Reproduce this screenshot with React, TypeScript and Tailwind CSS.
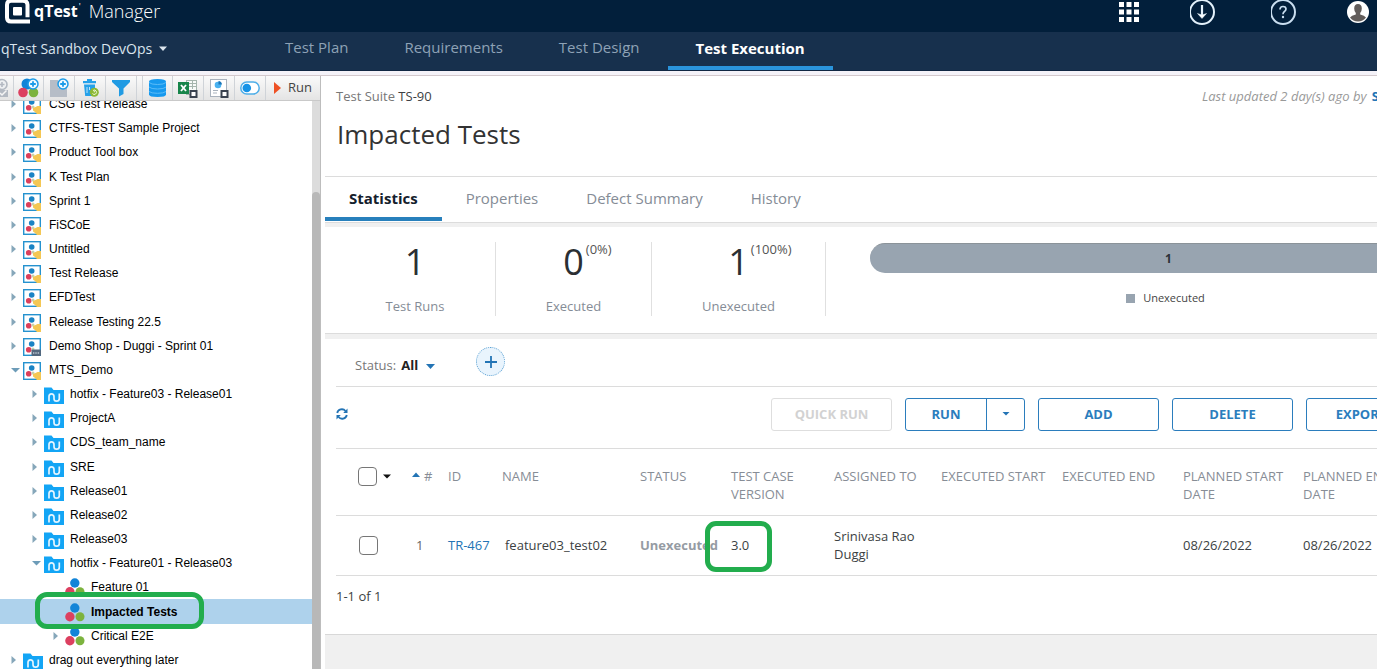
import type { ReactNode } from "react";

type IconKind = "release" | "demo" | "folder" | "suite";
type Arrow = "right" | "down" | "none";

interface TreeItem {
  label: string;
  level: 0 | 1 | 2;
  icon: IconKind;
  arrow: Arrow;
  selected?: boolean;
}

const tree: TreeItem[] = [
  { label: "CSG Test Release", level: 0, icon: "release", arrow: "right" },
  { label: "CTFS-TEST Sample Project", level: 0, icon: "release", arrow: "right" },
  { label: "Product Tool box", level: 0, icon: "release", arrow: "right" },
  { label: "K Test Plan", level: 0, icon: "release", arrow: "right" },
  { label: "Sprint 1", level: 0, icon: "release", arrow: "right" },
  { label: "FiSCoE", level: 0, icon: "release", arrow: "right" },
  { label: "Untitled", level: 0, icon: "release", arrow: "right" },
  { label: "Test Release", level: 0, icon: "release", arrow: "right" },
  { label: "EFDTest", level: 0, icon: "release", arrow: "right" },
  { label: "Release Testing 22.5", level: 0, icon: "release", arrow: "right" },
  { label: "Demo Shop - Duggi - Sprint 01", level: 0, icon: "demo", arrow: "right" },
  { label: "MTS_Demo", level: 0, icon: "release", arrow: "down" },
  { label: "hotfix - Feature03 - Release01", level: 1, icon: "folder", arrow: "right" },
  { label: "ProjectA", level: 1, icon: "folder", arrow: "right" },
  { label: "CDS_team_name", level: 1, icon: "folder", arrow: "right" },
  { label: "SRE", level: 1, icon: "folder", arrow: "right" },
  { label: "Release01", level: 1, icon: "folder", arrow: "right" },
  { label: "Release02", level: 1, icon: "folder", arrow: "right" },
  { label: "Release03", level: 1, icon: "folder", arrow: "right" },
  { label: "hotfix - Feature01 - Release03", level: 1, icon: "folder", arrow: "down" },
  { label: "Feature 01", level: 2, icon: "suite", arrow: "none" },
  { label: "Impacted Tests", level: 2, icon: "suite", arrow: "none", selected: true },
  { label: "Critical E2E", level: 2, icon: "suite", arrow: "right" },
  { label: "drag out everything later", level: 0, icon: "folder", arrow: "right" },
];

const indents = ["pl-[10px]", "pl-[31px]", "pl-[52px]"];

function TreeArrow({ arrow }: { arrow: Arrow }) {
  return (
    <svg width="12" height="10" viewBox="0 0 12 10" className="shrink-0" aria-hidden="true">
      {arrow === "right" && <path d="M1.5 1 L6 5 L1.5 9 Z" fill="#86a7ba" />}
      {arrow === "down" && <path d="M1 3 H10 L5.5 7.5 Z" fill="#6d9cb8" />}
    </svg>
  );
}

function TreeIcon({ kind }: { kind: IconKind }) {
  if (kind === "folder") {
    return (
      <svg width="20" height="17" viewBox="0 0 20 17" aria-hidden="true">
        <path d="M0 0.5 H7.5 L9.5 3 H20 V17 H0 Z" fill="#13a5f5" />
        <path
          d="M5 14.5 V9.5 Q5 6.8 7.5 6.8 Q10 6.8 10 9.5 V11.5 Q10 14.2 12.5 14.2 Q15.3 14.2 15.3 11.5 V6.5"
          fill="none"
          stroke="#e4f5ff"
          strokeWidth="1.7"
        />
      </svg>
    );
  }
  if (kind === "suite") {
    return (
      <svg width="20" height="19" viewBox="0 0 20 19" aria-hidden="true">
        <circle cx="9.8" cy="5" r="4.7" fill="#1184d8" />
        <circle cx="4.9" cy="13.7" r="4.7" fill="#dc4060" />
        <circle cx="15" cy="13.7" r="4.5" fill="#7cb33e" />
      </svg>
    );
  }
  return (
    <svg width="18" height="18" viewBox="0 0 18 18" aria-hidden="true">
      <rect x="0.7" y="0.7" width="16.6" height="16.6" fill="#fff" stroke="#2592cf" strokeWidth="1.4" />
      <circle cx="8.7" cy="6" r="2.8" fill="#1a83c4" />
      <circle cx="5.7" cy="11.7" r="2.8" fill="#dc3f5b" />
      <circle cx="10" cy="11" r="1.5" fill="#c5d3ae" />
      {kind === "release" ? (
        <path d="M10 12 L12.5 11 L14.5 10 H18 V18 H14 L12 16 L10 14.5 Z" fill="#f4c754" />
      ) : (
        <>
          <rect x="8.5" y="11.5" width="9.5" height="6.5" rx="1" fill="#54677d" />
          <path d="M10 15 H17" stroke="#b9c4cf" strokeWidth="1.5" strokeDasharray="1.4 0.9" />
        </>
      )}
    </svg>
  );
}

function Logo() {
  return (
    <svg width="26" height="26" viewBox="0 0 26 26" aria-hidden="true">
      <path
        d="M25 20.8 H6 Q2 20.8 2 16.8 V4 Q2 0 6 0 H18 Q22.5 0 22.500 4 V16.500"
        fill="none"
        stroke="#fff"
        strokeWidth="4"
        transform="translate(0 2.8)"
      />
      <rect x="8" y="9" width="9" height="8.5" rx="1" fill="#fff" />
    </svg>
  );
}

function PlusBadge({ cx, cy }: { cx: number; cy: number }) {
  return (
    <g transform={`translate(${cx} ${cy})`}>
      <circle r="5" fill="#f2faff" stroke="#1b9be8" strokeWidth="1.5" />
      <path d="M-2.8 0 H2.8 M0 -2.8 V2.8" stroke="#1b9be8" strokeWidth="1.8" />
    </g>
  );
}

function CornerBox() {
  return (
    <g>
      <rect x="11.5" y="12" width="8" height="8" fill="#39424f" />
      <rect x="13.500" y="14" width="4" height="4" fill="#fff" />
    </g>
  );
}

function ToolButton({ label, className, children }: { label: string; className: string; children: ReactNode }) {
  return (
    <button
      type="button"
      aria-label={label}
      className={`flex h-full shrink-0 items-center justify-center overflow-hidden border-r border-[#cfd3d8] ${className}`}
    >
      {children}
    </button>
  );
}

function TreeToolbar() {
  return (
    <div className="flex h-[25px] shrink-0 items-center border-b border-[#c9c9c9] bg-linear-to-b from-[#fafafa] to-[#e4e4e4]">
      <ToolButton label="New release" className="w-[14px] !justify-end pr-[5px]">
        <svg width="8" height="20" viewBox="0 0 8 20" className="shrink-0">
          <circle cx="2" cy="6.5" r="5" fill="#eef0f2" stroke="#b3b9c2" strokeWidth="1.6" />
          <path d="M0 6.500 H4.500 M2 4 V9" stroke="#b3b9c2" strokeWidth="1.6" />
          <path d="M0 12 H8 V19 H0 Z" fill="#b3b9c2" />
          <path d="M0 15 L2 17 L6.500 12.500" stroke="#f5f5f5" strokeWidth="1.5" fill="none" />
        </svg>
      </ToolButton>
      <ToolButton label="New test suite" className="w-[30px]">
        <svg width="22" height="20" viewBox="0 0 22 20" className="shrink-0">
          <circle cx="9" cy="6" r="5.5" fill="#1184d8" />
          <circle cx="5" cy="14.5" r="4.8" fill="#dc4060" />
          <circle cx="15.5" cy="14.5" r="4.8" fill="#7cb33e" />
          <PlusBadge cx={15} cy={6} />
        </svg>
      </ToolButton>
      <ToolButton label="New test run" className="w-[31px]">
        <svg width="20" height="20" viewBox="0 0 20 20" className="shrink-0">
          <path d="M1 2 H9 V10 H18 V19 H1 Z" fill="#b6bdc7" />
          <PlusBadge cx={14} cy={6} />
        </svg>
      </ToolButton>
      <ToolButton label="Delete" className="w-[31px]">
        <svg width="18" height="20" viewBox="0 0 18 20" className="shrink-0">
          <path d="M2 3 H6 V1 H11 V3 H15 V5.2 H2 Z M3 6.5 H14 V18 H4.2 Z" fill="#25a1ea" />
          <path d="M6 9 V15 M8.5 9 V12" stroke="#bde4fa" />
          <circle cx="13.3" cy="14.3" r="4.5" fill="#8cb833" />
          <path d="M11.5 15.5 A2.2 2.2 0 1 0 12 12.5 M13.3 14.3 V12.5" stroke="#eef7d5" fill="none" />
        </svg>
      </ToolButton>
      <ToolButton label="Filter" className="w-[31px]">
        <svg width="18" height="20" viewBox="0 0 18 20" className="shrink-0">
          <path d="M0 2 H18 V4 L11.5 10.5 V16 L7 18.5 V10.5 L0 4 Z" fill="#219be3" />
        </svg>
      </ToolButton>
      <ToolButton label="Data query" className="ml-[5px] w-[31px] border-l">
        <svg width="17" height="20" viewBox="0 0 17 20" className="shrink-0">
          <path d="M0 3.5 Q0 1 8.5 1 Q17 1 17 3.5 V16.5 Q17 19 8.5 19 Q0 19 0 16.5 Z" fill="#1699ee" />
          <path
            d="M0 4.5 Q2 6.5 8.5 6.5 Q15 6.5 17 4.5 M0 9 Q2 11 8.5 11 Q15 11 17 9 M0 13.5 Q2 15.3 8.5 15.3 Q15 15.3 17 13.5"
            fill="none"
            stroke="#5bbcf8"
          />
        </svg>
      </ToolButton>
      <ToolButton label="Export to Excel" className="w-[31px]">
        <svg width="20" height="20" viewBox="0 0 20 20" className="shrink-0">
          <rect x="8.5" y="2.5" width="10" height="14" fill="#f7faf8" stroke="#a5b5ad" />
          <path d="M11 5.5 H18 M11 8.5 H18 M14.5 3 V11" stroke="#a5b5ad" />
          <rect x="0" y="4" width="11" height="12" fill="#17854a" />
          <path d="M3 7 L8 13 M8 7 L3 13" stroke="#fff" strokeWidth="1.8" />
          <CornerBox />
        </svg>
      </ToolButton>
      <ToolButton label="Export report" className="w-[31px]">
        <svg width="20" height="20" viewBox="0 0 20 20" className="shrink-0">
          <rect x="1.5" y="1.5" width="16" height="17" fill="#fff" stroke="#a9b2bd" />
          <circle cx="9" cy="7" r="3.3" fill="#4ab2f0" />
          <path d="M9.5 6.5 V3 Q12.5 3 13 6.5 Z" fill="#1b75b8" />
          <path d="M4 12.5 H9 M4 15 H8" stroke="#a9b2bd" />
          <CornerBox />
        </svg>
      </ToolButton>
      <ToolButton label="Toggle view" className="w-[31px]">
        <svg width="20" height="14" viewBox="0 0 20 14" className="shrink-0">
          <rect x="0.8" y="1" width="18.4" height="12" rx="6" fill="#fff" stroke="#4faee8" strokeWidth="1.5" />
          <circle cx="6.8" cy="7" r="4.3" fill="#1793e6" />
        </svg>
      </ToolButton>
      <button type="button" className="flex h-full flex-1 items-center gap-[6px] pl-[8px] text-[13px] text-[#444]">
        <svg width="8" height="14" viewBox="0 0 8 14" aria-hidden="true">
          <path d="M0 1 L7 7 L0 13 Z" fill="#ee5124" />
        </svg>
        Run
      </button>
    </div>
  );
}

function Sidebar() {
  return (
    <aside className="flex w-[321px] shrink-0 flex-col border-r border-[#bdbdbd] bg-white">
      <TreeToolbar />
      <div className="flex min-h-0 flex-1 overflow-hidden">
        <ul className="-mt-[9px] grid h-[580px] flex-1 auto-rows-fr font-['Liberation_Sans',Arial,sans-serif] text-[12px] text-black">
          {tree.map((item) => (
            <li
              key={item.label}
              className={`relative flex items-center ${indents[item.level]} ${item.selected ? "bg-[#aed2ec] font-bold" : ""}`}
            >
              <TreeArrow arrow={item.arrow} />
              <span className="flex h-[24px] w-[22px] shrink-0 items-end pb-[2px] pl-px">
                <TreeIcon kind={item.icon} />
              </span>
              <a href="#" className="whitespace-nowrap pl-[5px]">
                {item.label}
              </a>
              {item.selected && (
                <span className="pointer-events-none absolute top-[-7px] left-[35px] z-10 h-[37px] w-[169px] rounded-[12px] border-[5px] border-[#22ad4d]" />
              )}
            </li>
          ))}
        </ul>
        <div className="w-[8px] shrink-0 bg-[#dcdcdc] pt-[91px]">
          <div className="h-full rounded-t-[4px] bg-[#b8b8b8]" />
        </div>
      </div>
    </aside>
  );
}

function Header() {
  return (
    <header className="shrink-0">
      <div className="flex h-[32px] items-center justify-between overflow-hidden bg-[#021f3b] pr-[8px] pl-[5px] text-white">
        <div className="flex items-center pb-[10px]">
          <Logo />
          <span className="pl-[3px] text-[16px] font-bold">qTest</span>
          <span className="-mt-[8px] pl-px text-[9px]">'</span>
          <span className="pl-[8px] text-[18px] font-light">Manager</span>
        </div>
        <div className="flex items-center pb-[8px]">
          <button type="button" aria-label="Applications" className="mr-[49px]">
            <svg width="22" height="22" viewBox="0 0 22 22" fill="#fff">
              {[1, 8.5, 16].map((y) => [0, 7.5, 15].map((x) => <rect key={`${x}-${y}`} x={x} y={y} width="5" height="5" />))}
            </svg>
          </button>
          <button type="button" aria-label="Downloads" className="mr-[55px]">
            <svg width="26" height="26" viewBox="0 0 26 26" fill="none" stroke="#e3f1fb">
              <circle cx="12" cy="13" r="12" strokeWidth="2" />
              <path d="M12 6 V18" strokeWidth="2.2" />
              <path d="M7.5 14.5 L12 19.5 L16.5 14.5 L12 16 Z" fill="#fff" strokeWidth="0.5" />
            </svg>
          </button>
          <button type="button" aria-label="Help" className="mr-[50px]">
            <svg width="26" height="26" viewBox="0 0 26 26" fill="none" stroke="#c9def0">
              <circle cx="12" cy="13" r="12" strokeWidth="2" />
              <path d="M9 10.5 Q9 7.5 12 7.5 Q15 7.5 15 10 Q15 11.5 13.2 12.7 Q12 13.6 12 15.3" strokeWidth="1.7" />
              <circle cx="12" cy="18" r="1.2" fill="#c9def0" stroke="none" />
            </svg>
          </button>
          <button type="button" aria-label="Account">
            <svg width="22" height="22" viewBox="0 0 22 22">
              <circle cx="11" cy="11" r="11" fill="#fff" />
              <path
                d="M11 3 Q14.8 3 14.8 7.5 Q14.8 10.5 13.2 12 V13.5 Q17.5 14.5 19 16.5 Q16 20.5 11 20.5 Q6 20.5 3 16.5 Q4.5 14.5 8.8 13.5 V12 Q7.2 10.5 7.2 7.5 Q7.2 3 11 3 Z"
                fill="#625d5b"
              />
            </svg>
          </button>
        </div>
      </div>
      <div className="flex h-[39px] items-stretch border-b border-[#102743] bg-[#17304d] text-[#8ea2b6]">
        <button type="button" className="flex w-[257px] items-center gap-[7px] pb-[5px] pl-[1px] text-[14px] text-[#dbe5ee]">
          qTest Sandbox DevOps
          <svg width="8" height="5" viewBox="0 0 8 5" aria-hidden="true">
            <path d="M0 0.5 H8 L4 5 Z" fill="#dbe5ee" />
          </svg>
        </button>
        <nav className="flex text-[15px]">
          {["Test Plan", "Requirements", "Test Design"].map((label) => (
            <a key={label} href="#" className="flex items-center px-[28px] pb-[7px]">
              {label}
            </a>
          ))}
          <a href="#" aria-current="page" className="flex items-center border-b-[4px] border-[#2a94dc] px-[28px] pb-[2px] font-bold text-white">
            Test Execution
          </a>
        </nav>
      </div>
    </header>
  );
}

function Stat({ value, percent, label, className }: { value: string; percent?: string; label: string; className: string }) {
  return (
    <div className={`flex h-[74px] shrink-0 flex-col items-center border-r border-[#e0e0e0] ${className}`}>
      <div className="relative text-[36px] leading-[40px] text-[#2b2f33]">
        {value}
        {percent && <span className="absolute top-0 left-full pl-[2px] text-[13px] leading-[14px] text-[#555]">{percent}</span>}
      </div>
      <div className="pt-[14px] text-[13px] leading-[20px] text-[#858c96]">{label}</div>
    </div>
  );
}

const outline =
  "flex h-[33px] w-[121px] items-center justify-center rounded-[3px] border border-[#2b7dbd] pt-[2px] text-[13px] font-bold text-[#2b7dbd]";

const columns = [
  { title: "ID", width: "w-[54px]" },
  { title: "NAME", width: "w-[138px]" },
  { title: "STATUS", width: "w-[91px]" },
  { title: "TEST CASE VERSION", width: "w-[103px]" },
  { title: "ASSIGNED TO", width: "w-[107px]" },
  { title: "EXECUTED START", width: "w-[121px]" },
  { title: "EXECUTED END", width: "w-[121px]" },
  { title: "PLANNED START DATE", width: "w-[120px]" },
  { title: "PLANNED END DATE", width: "w-auto" },
];

const checkbox = "block size-[19px] shrink-0 appearance-none rounded-[4px] border border-[#767676] bg-white checked:bg-[#2374b5]";

function RunsTable() {
  return (
    <table className="w-full table-fixed border-collapse text-left text-[13px] leading-[18px] text-[#3c3f43]">
      <thead>
        <tr className="h-[66px] border-b border-[#dcdcdc] align-top text-[#878d96]">
          <th className="w-[72px] pt-[18px] pl-[22px] font-normal">
            <span className="flex items-center gap-[6px]">
              <input type="checkbox" aria-label="Select all test runs" className={checkbox} />
              <svg width="8" height="5" viewBox="0 0 8 5" aria-hidden="true">
                <path d="M0 0.5 H8 L4 4.5 Z" fill="#111" />
              </svg>
            </span>
          </th>
          <th className="w-[40px] pt-[18px] pl-[4px] font-normal">
            <span className="flex items-center gap-[4px]">
              <svg width="8" height="8" viewBox="0 0 8 8" aria-hidden="true">
                <path d="M0 5 H8 L4 0.5 Z" fill="#2374b5" />
              </svg>
              #
            </span>
          </th>
          {columns.map((column) => (
            <th key={column.title} className={`pt-[18px] pr-[8px] font-normal ${column.width}`}>
              {column.title}
            </th>
          ))}
        </tr>
      </thead>
      <tbody>
        <tr className="h-[60px] border-b border-[#dcdcdc]">
          <td className="pl-[23px]">
            <input type="checkbox" aria-label="Select TR-467" className={checkbox} />
          </td>
          <td className="pl-[8px] text-[#666]">1</td>
          <td className="whitespace-nowrap">
            <a href="#" className="text-[#2374b5]">
              TR-467
            </a>
          </td>
          <td className="pl-[3px]">feature03_test02</td>
          <td className="font-bold text-[#959ba3]">Unexecuted</td>
          <td className="relative">
            3.0
            <span className="pointer-events-none absolute top-[5px] left-[-26px] h-[51px] w-[67px] rounded-[11px] border-[5px] border-[#22ad4d]" />
          </td>
          <td className="pr-[16px]">Srinivasa Rao Duggi</td>
          <td />
          <td />
          <td>08/26/2022</td>
          <td>08/26/2022</td>
        </tr>
      </tbody>
    </table>
  );
}

function Main() {
  return (
    <main className="ml-[4px] flex min-w-0 flex-1 flex-col overflow-hidden bg-[#f0f0f0] text-[13px]">
      <section className="min-w-[1142px] border-b border-[#dcdcdc] bg-white">
        <div className="flex items-start justify-between pt-[10px] pl-[11px] leading-[20px]">
          <div>
            <p className="text-[#3c3f43]">
              <span className="text-[#777]">Test Suite</span> TS-90
            </p>
            <h1 className="pt-[10px] pb-[24px] pl-px text-[26px] leading-[36px] text-[#333]">Impacted Tests</h1>
          </div>
          <p className="w-[265px] shrink-0 whitespace-nowrap text-[#999] italic">
            Last updated 2 day(s) ago by{" "}
            <a href="#" className="pl-[2px] font-bold text-[#2374b5] not-italic">
              S
            </a>
          </p>
        </div>
        <nav className="flex h-[46px] border-t border-[#dcdcdc] text-[15px] text-[#858c96]">
          <a href="#" aria-current="page" className="flex h-[44px] items-center border-b-[4px] border-[#2880bc] px-[24px] pt-[2px] font-bold text-[#14202c]">
            Statistics
          </a>
          {["Properties", "Defect Summary", "History"].map((label) => (
            <a key={label} href="#" className="flex h-[44px] items-center px-[24px] pb-[2px]">
              {label}
            </a>
          ))}
        </nav>
      </section>
      <section className="mt-[4px] flex h-[107px] min-w-[1142px] shrink-0 border-b border-[#dcdcdc] bg-white pt-[15px]">
        <Stat value="1" label="Test Runs" className="w-[171px] pl-[10px]" />
        <Stat value="0" percent="(0%)" label="Executed" className="w-[156px]" />
        <Stat value="1" percent="(100%)" label="Unexecuted" className="w-[174px]" />
        <div className="ml-[44px] flex flex-1 flex-col items-center pt-px">
          <div className="flex h-[30px] w-full items-center justify-center rounded-full border-t border-[#8b9399] bg-[#98a4b0] text-[12px] font-bold text-[#2b3138]">
            1
          </div>
          <div className="flex items-center gap-[8px] pt-[16px] pr-[6px] text-[11px] leading-[18px] text-[#444]">
            <span className="size-[9px] bg-[#98a4b0]" />
            Unexecuted
          </div>
        </div>
      </section>
      <section className="mt-[5px] min-w-[1142px] border-b border-[#d8d8d8] bg-white pl-[11px]">
        <div className="w-full max-w-[1131px] pr-[40px]">
          <div className="flex h-[48px] items-center border-b border-[#dcdcdc] pl-[19px]">
            <button type="button" className="flex items-center pt-[7px] text-[#777]">
              Status:
              <span className="pr-[8px] pl-[5px] font-bold text-[#222]">All</span>
              <svg width="9" height="5" viewBox="0 0 9 5" aria-hidden="true">
                <path d="M0 0 H9 L4.5 5 Z" fill="#2374b5" />
              </svg>
            </button>
            <button
              type="button"
              aria-label="Add filter"
              className="mb-[2px] ml-[41px] flex size-[29px] items-center justify-center rounded-full border border-dotted border-[#5ea3d4] bg-[#e9f4fd]"
            >
              <svg width="12" height="12" viewBox="0 0 12 12" stroke="#2374b5" strokeWidth="1.8">
                <path d="M0 6 H12 M6 0 V12" />
              </svg>
            </button>
          </div>
          <div className="flex h-[62px] items-center gap-[13px] border-b border-[#dcdcdc] pb-[7px]">
            <button type="button" aria-label="Refresh" className="mr-auto">
              <svg width="12" height="12" viewBox="0 0 12 12" fill="none" stroke="#2374b5" strokeWidth="1.8">
                <path d="M1.2 5 A4.7 4.5 0 0 1 9.5 3 M10.8 7 A4.7 4.5 0 0 1 2.5 9" />
                <path d="M11.5 0.5 V5 H7.2 Z M0.5 11.5 V7 H4.8 Z" fill="#2374b5" stroke="none" />
              </svg>
            </button>
            <button type="button" disabled className="h-[33px] w-[121px] rounded-[3px] border border-[#dedede] pt-[2px] text-[13px] font-bold text-[#d2d2d2]">
              QUICK RUN
            </button>
            <div className="flex h-[33px] w-[120px] rounded-[3px] border border-[#2b7dbd]">
              <button type="button" className="flex-1 pt-[2px] text-[13px] font-bold text-[#2b7dbd]">
                RUN
              </button>
              <button type="button" aria-label="More run options" className="flex w-[38px] items-center justify-center border-l border-[#2b7dbd] pb-px">
                <svg width="8" height="4" viewBox="0 0 8 4">
                  <path d="M0.5 0 H7.5 L4 3.5 Z" fill="#2374b5" />
                </svg>
              </button>
            </div>
            <button type="button" className={outline}>
              ADD
            </button>
            <button type="button" className={outline}>
              DELETE
            </button>
            <button type="button" className={`${outline} gap-[6px]`}>
              EXPORT
              <svg width="5" height="4" viewBox="0 0 5 4" aria-hidden="true">
                <path d="M0 0 H5 L2.5 3.5 Z" fill="#2374b5" />
              </svg>
            </button>
          </div>
          <RunsTable />
          <p className="pt-[10px] pb-[28px] leading-[20px] text-[#3c3f43]">1-1 of 1</p>
        </div>
      </section>
    </main>
  );
}

export default function App() {
  return (
    <div className="flex h-screen flex-col overflow-hidden bg-white font-['Open_Sans','Noto_Sans',sans-serif]">
      <Header />
      <div className="flex min-h-0 flex-1 border-t-[4px] border-[#f4f2f8]">
        <div className="flex min-w-0 flex-1 border-t border-[#d3c9cd]">
          <Sidebar />
          <Main />
        </div>
      </div>
    </div>
  );
}
